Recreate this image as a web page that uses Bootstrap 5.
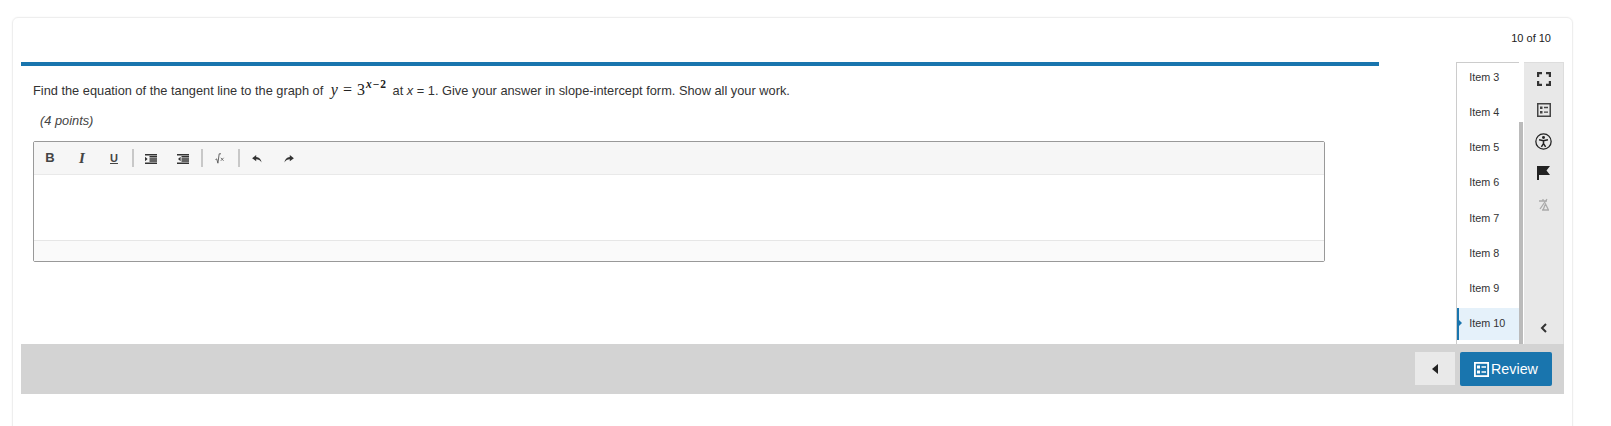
<!DOCTYPE html>
<html lang="en">
<head>
    <meta charset="UTF-8">
    <meta name="viewport" content="width=device-width, initial-scale=1.0">
    <title>Test Item</title>
    <link href="https://cdn.jsdelivr.net/npm/bootstrap@5.3.0/dist/css/bootstrap.min.css" rel="stylesheet">
    <style>
        html, body {
            height: 426px;
            overflow: hidden;
            background: #fff;
            font-family: "Liberation Sans", Arial, sans-serif;
            color: #333;
        }
        .exam-shell {
            width: 1561px;
            height: 430px;
            margin: 17px 0 0 12px;
            padding: 0 8px;
            border: 1px solid #eee;
            border-radius: 6px 6px 0 0;
            box-shadow: 0 0 2px rgba(0,0,0,.05);
        }
        .exam-count {
            height: 44px;
            padding: 14px 13px 0 0;
            font-size: 11px;
            line-height: 12px;
            color: #222;
            text-align: right;
        }
        .exam-main {
            height: 282px;
        }
        .question-col {
            width: 1361px;
            margin-right: 77px;
        }
        .question-rule {
            height: 4px;
            background: #1975ae;
        }
        .question-text {
            margin: 8px 0 0 12px;
            height: 35px;
            font-size: 12.8px;
            line-height: 32px;
            color: #333;
            white-space: nowrap;
        }
        .math-bit {
            font-family: "Liberation Serif", "DejaVu Serif", serif;
            font-size: 16px;
            margin: 0 2px 0 4px;
            color: #222;
        }
        .math-bit .math-eq {
            margin: 0 5px;
        }
        .math-bit sup {
            font-size: 11.5px;
            top: -.6em;
            margin-left: 1px;
            font-weight: 700;
            letter-spacing: 1px;
        }
        .points-text {
            margin: 0 0 0 19px;
            height: 33px;
            font-size: 12.8px;
            line-height: 24px;
            font-style: italic;
            color: #444;
        }
        .editor-box {
            width: 1292px;
            height: 121px;
            margin-left: 12px;
            margin-top: -1px;
            border: 1px solid #999;
            border-radius: 2px;
        }
        .editor-tools {
            height: 33px;
            background: #f6f6f6;
            border-bottom: 1px solid #e9e9e9;
        }
        .tool-btn {
            width: 32px;
            height: 32px;
            padding: 0;
            border: 0;
            border-radius: 0;
            color: #444;
            font-size: 13px;
            line-height: 32px;
        }
        .tool-italic {
            font-family: "Liberation Serif", serif;
            font-size: 15px;
        }
        .tool-under {
            font-size: 11px;
        }
        .tool-sep {
            width: 2px;
            height: 18px;
            margin: 0 1.5px;
            background: #c8c8c8;
        }
        .editor-area {
            height: 65px;
        }
        .editor-foot {
            height: 21px;
            background: #fafafa;
            border-top: 1px solid #e6e6e6;
        }
        .item-list {
            width: 63px;
            height: 282px;
            border-left: 1px solid #ccc;
            border-top: 1px solid #ccc;
            overflow: hidden;
        }
        .item-entry {
            height: 32px;
            margin-bottom: 3.15px;
            padding-left: 12px;
            font-size: 10.8px;
            line-height: 30px;
            color: #333;
            position: relative;
        }
        .item-entry:first-child {
            margin-top: -1px;
        }
        .item-entry.is-current {
            background: #e5f1fa;
            border-left: 2px solid #1975ae;
            padding-left: 10px;
        }
        .item-entry.is-current::before {
            content: "";
            position: absolute;
            left: 0;
            top: 12px;
            border-left: 3px solid #1975ae;
            border-top: 3px solid transparent;
            border-bottom: 3px solid transparent;
        }
        .list-scroll {
            width: 4px;
            background: #bbb;
        }
        .list-thumb {
            height: 60px;
            background: #fff;
        }
        .tool-rail {
            width: 40px;
            margin-left: 1px;
            background: #e8e8e8;
            border-top: 1px solid #ddd;
            border-right: 1px solid #ddd;
        }
        .rail-icon {
            height: 31.5px;
        }
        .rail-back {
            margin-top: auto;
            height: 32px;
        }
        .exam-footer {
            height: 50px;
            background: #d3d3d3;
            padding: 8px 12px 0 0;
        }
        .back-btn {
            width: 40px;
            height: 33px;
            padding: 0;
            margin-right: 5px;
            border: 0;
            border-radius: 0;
            background: #e9e9e9;
            color: #222;
        }
        .review-btn {
            width: 92px;
            height: 34px;
            padding: 0;
            gap: 2px;
            border: 0;
            border-radius: 2px;
            background: #1975ae;
            color: #fff;
            font-size: 14.3px;
            line-height: 34px;
        }
        .review-btn:hover {
            background: #1975ae;
            color: #fff;
        }
    </style>
</head>
<body>
    <div class="exam-shell">
        <div class="exam-count">10 of 10</div>

        <div class="exam-main d-flex">
            <div class="question-col">
                <div class="question-rule"></div>
                <p class="question-text">Find the equation of the tangent line to the graph of <span class="math-bit"><i>y</i><span class="math-eq">=</span>3<sup><i>x</i>&minus;2</sup></span> at <i>x</i> = 1. Give your answer in slope-intercept form. Show all your work.</p>
                <p class="points-text">(4 points)</p>

                <div class="editor-box">
                    <div class="editor-tools d-flex align-items-center">
                        <button class="btn tool-btn fw-bold">B</button>
                        <button class="btn tool-btn tool-italic fw-bold fst-italic">I</button>
                        <button class="btn tool-btn tool-under fw-bold text-decoration-underline">U</button>
                        <span class="tool-sep"></span>
                        <button class="btn tool-btn">
                            <svg width="12" height="10" viewBox="0 0 12 10" fill="#333"><path d="M0 0h12v1.500H0zM4.500 2.100H12v1.500H4.500zM4.500 4.200H12v1.500H4.500zM4.500 6.300H12v1.500H4.500zM0 8.500h12V10H0zM0 2.800l2.600 2.200L0 7.200z"/></svg>
                        </button>
                        <button class="btn tool-btn">
                            <svg width="12" height="10" viewBox="0 0 12 10" fill="#333"><path d="M0 0h12v1.500H0zM4.500 2.100H12v1.500H4.500zM4.500 4.200H12v1.500H4.500zM4.500 6.300H12v1.500H4.500zM0 8.500h12V10H0zM3.600 2.800L1 5l2.600 2.200z"/></svg>
                        </button>
                        <span class="tool-sep"></span>
                        <button class="btn tool-btn">
                            <svg width="10" height="11" viewBox="0 0 10 11" fill="none" stroke="#555"><path d="M.5 6.500l1.200-.6 1.200 4.300L4.200.8H6" stroke-width=".9"/><path d="M5.800 4.800l2.800 3m0-3l-2.800 3" stroke-width=".8"/></svg>
                        </button>
                        <span class="tool-sep"></span>
                        <button class="btn tool-btn">
                            <svg width="10" height="8" viewBox="0 0 11 9" fill="#333"><path d="M4.600 0L0 3.600l4.600 3.400V4.900c2.600 0 4.600.9 6 3.600C10.400 5 8 2.500 4.600 2.200z"/></svg>
                        </button>
                        <button class="btn tool-btn">
                            <svg width="10" height="8" viewBox="0 0 11 9" fill="#333"><path d="M6.400 0L11 3.600 6.400 7V4.900c-2.600 0-4.600.9-6 3.600C.6 5 3 2.500 6.400 2.200z"/></svg>
                        </button>
                    </div>
                    <div class="editor-area"></div>
                    <div class="editor-foot"></div>
                </div>
            </div>

            <div class="item-list">
                <div class="item-entry">Item 3</div>
                <div class="item-entry">Item 4</div>
                <div class="item-entry">Item 5</div>
                <div class="item-entry">Item 6</div>
                <div class="item-entry">Item 7</div>
                <div class="item-entry">Item 8</div>
                <div class="item-entry">Item 9</div>
                <div class="item-entry is-current">Item 10</div>
            </div>
            <div class="list-scroll"><div class="list-thumb"></div></div>

            <div class="tool-rail d-flex flex-column align-items-center">
                <div class="rail-icon d-flex align-items-center justify-content-center">
                    <svg width="14" height="14" viewBox="0 0 14 14" fill="none" stroke="#333" stroke-width="2.200"><path d="M1.100 5V1.100H5M9 1.100h3.900V5M12.900 9v3.900H9M5 12.900H1.100V9"/></svg>
                </div>
                <div class="rail-icon d-flex align-items-center justify-content-center">
                    <svg width="14" height="14" viewBox="0 0 14 14" fill="none" stroke="#444"><rect x=".75" y=".75" width="12.500" height="12.500" stroke-width="1.500"/><path d="M3 3.500h2.500V6H3zM3 8h2.500v2.500H3z" fill="#444" stroke="none"/><path d="M7 4.500h4M7 9.200h4" stroke-width="1.300"/></svg>
                </div>
                <div class="rail-icon d-flex align-items-center justify-content-center">
                    <svg width="17" height="17" viewBox="0 0 16 16" fill="none" stroke="#222"><circle cx="8" cy="8" r="7.200" stroke-width="1.200"/><circle cx="8" cy="4.300" r="1.400" fill="#222" stroke="none"/><path d="M3.800 6.300L8 7.200l4.200-.9M8 7v3M8 10l-2 3M8 10l2 3" stroke-width="1.400"/></svg>
                </div>
                <div class="rail-icon d-flex align-items-center justify-content-center">
                    <svg width="13" height="14" viewBox="0 0 13 14" fill="#222"><path d="M0 0h13L9.500 4.500 13 9H2v5H0z"/></svg>
                </div>
                <div class="rail-icon d-flex align-items-center justify-content-center">
                    <svg width="12" height="13" viewBox="0 0 12 13" fill="none" stroke="#aaa" stroke-width="1.300"><path d="M1 3h8M5 1v2M9 1L2 11M5 12l2.500-6L10.500 12M4 12h7"/></svg>
                </div>
                <div class="rail-back d-flex align-items-center justify-content-center">
                    <svg width="7" height="10" viewBox="0 0 7 10" fill="none" stroke="#333" stroke-width="2"><path d="M6 1L2 5l4 4"/></svg>
                </div>
            </div>
        </div>

        <div class="exam-footer d-flex justify-content-end align-items-start">
            <button class="btn back-btn d-flex align-items-center justify-content-center">
                <svg width="6" height="10" viewBox="0 0 6 10" fill="#222"><path d="M6 0v10L0 5z"/></svg>
            </button>
            <button class="btn review-btn d-flex align-items-center justify-content-center">
                <svg width="15" height="15" viewBox="0 0 15 15" fill="none" stroke="#fff"><rect x=".9" y=".9" width="13.200" height="13.200" stroke-width="1.800"/><path d="M3 3.500h3v3H3zM3 8.500h3v3H3z" fill="#fff" stroke="none"/><path d="M7.500 5H12M7.500 10H12" stroke-width="1.300"/></svg>Review
            </button>
        </div>
    </div>

    <script src="https://cdn.jsdelivr.net/npm/bootstrap@5.3.0/dist/js/bootstrap.bundle.min.js"></script>
</body>
</html>
